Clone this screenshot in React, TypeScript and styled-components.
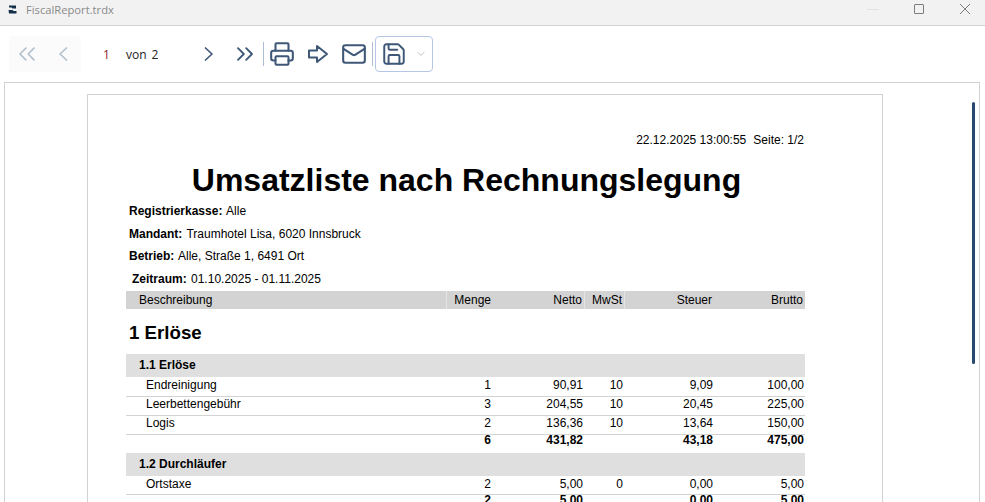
import React from "react";
import styled, { createGlobalStyle } from "styled-components";
import { ChevronDown, ChevronsLeft, ChevronsRight, Mail, Printer, Save } from "lucide-react";

const GlobalStyle = createGlobalStyle`
  html, body {
    margin: 0;
    padding: 0;
    height: 502px;
    overflow: hidden;
    background: #fff;
  }
`;

const header = ["Beschreibung", "Menge", "Netto", "MwSt", "Steuer", "Brutto"];

const groups = [
  {
    title: "1.1 Erlöse",
    firstRowHeight: 20,
    rows: [
      ["Endreinigung", "1", "90,91", "10", "9,09", "100,00"],
      ["Leerbettengebühr", "3", "204,55", "10", "20,45", "225,00"],
      ["Logis", "2", "136,36", "10", "13,64", "150,00"],
    ],
    total: ["", "6", "431,82", "", "43,18", "475,00"],
  },
  {
    title: "1.2 Durchläufer",
    firstRowHeight: 19,
    rows: [["Ortstaxe", "2", "5,00", "0", "0,00", "5,00"]],
    total: ["", "2", "5,00", "", "0,00", "5,00"],
  },
];

const SingleChevron: React.FC<{ left?: boolean }> = ({ left }) => (
  <svg width="10" height="14" viewBox="0 0 10 14" fill="none">
    <path
      d={left ? "M8.5 1L2 7l6.5 6" : "M1.5 1L8 7l-6.5 6"}
      stroke="currentColor"
      strokeWidth="1.7"
      strokeLinecap="round"
      strokeLinejoin="round"
    />
  </svg>
);

const App: React.FC = () => {
  return (
    <Window>
      <GlobalStyle />
      <TitleBar>
        <TitleLeft>
          <svg width="9" height="9" viewBox="0 0 9 9">
            <path d="M1 0.5h7v3H4.5L3.5 2.5H1zM0.5 5h4l1 1h3v2.5H1z" fill="#14304a" />
          </svg>
          <TitleText>FiscalReport.trdx</TitleText>
        </TitleLeft>
        <WindowButtons>
          <svg width="12" height="12" viewBox="0 0 12 12">
            <path d="M0 6.5h12" stroke="#e2e2e2" strokeWidth="1" />
          </svg>
          <svg width="12" height="12" viewBox="0 0 12 12">
            <rect x="1.5" y="1.5" width="9" height="9" fill="none" stroke="#7d7d7d" strokeWidth="1" rx="0.5" />
          </svg>
          <svg width="12" height="12" viewBox="0 0 12 12">
            <path d="M1 1l10 10M11 1L1 11" stroke="#7d7d7d" strokeWidth="1" />
          </svg>
        </WindowButtons>
      </TitleBar>

      <Toolbar>
        <DisabledNav>
          <NavButton $disabled><ChevronsLeft size={28} strokeWidth={1.4} /></NavButton>
          <NavButton $disabled><SingleChevron left /></NavButton>
        </DisabledNav>
        <PageNumber>1</PageNumber>
        <PageOf>von</PageOf>
        <PageTotal>2</PageTotal>
        <NavButton><SingleChevron /></NavButton>
        <NavButton><ChevronsRight size={28} strokeWidth={1.6} /></NavButton>
        <Divider />
        <ActionButton><Printer size={26} strokeWidth={1.9} /></ActionButton>
        <ActionButton>
          <svg width="22" height="20" viewBox="0 0 22 20" fill="none">
            <path d="M2 6.5h8V2l10 8-10 8v-4.5H2z" stroke="currentColor" strokeWidth="2" strokeLinejoin="round" />
          </svg>
        </ActionButton>
        <ActionButton><Mail size={26} strokeWidth={1.9} /></ActionButton>
        <Divider />
        <SaveButton>
          <Save size={26} strokeWidth={1.8} />
          <ChevronDown size={12} strokeWidth={1.5} color="#a9a9a9" />
        </SaveButton>
      </Toolbar>

      <Viewer>
        <Page>
          <Stamp>
            <span>22.12.2025 13:00:55</span>
            <span>Seite: 1/2</span>
          </Stamp>
          <Title>Umsatzliste nach Rechnungslegung</Title>
          <MetaLine><b>Registrierkasse:</b> Alle</MetaLine>
          <MetaLine><b>Mandant:</b> Traumhotel Lisa, 6020 Innsbruck</MetaLine>
          <MetaLine><b>Betrieb:</b> Alle, Straße 1, 6491 Ort</MetaLine>
          <MetaLine $indent><b>Zeitraum:</b> 01.10.2025 - 01.11.2025</MetaLine>

          <HeaderRow>
            {header.map((label, i) => (
              <HeaderCell
                key={label}
                $first={i === 0}
                $plain={i === 1 || i >= 4}
                $tight={i === 1 || i === 5}
              >
                {label}
              </HeaderCell>
            ))}
          </HeaderRow>

          <SectionTitle>1 Erlöse</SectionTitle>

          {groups.map((group) => (
            <div key={group.title}>
              <GroupBar>{group.title}</GroupBar>
              {group.rows.map((row, r) => (
                <Row key={row[0]} $height={r === 0 ? group.firstRowHeight : 19} $lead={r === 0}>
                  {row.map((value, i) => (
                    <Cell key={i} $first={i === 0} $tight={i === 5}>{value}</Cell>
                  ))}
                </Row>
              ))}
              <TotalRow>
                {group.total.map((value, i) => (
                  <Cell key={i} $first={i === 0} $tight={i === 5}>{value}</Cell>
                ))}
              </TotalRow>
            </div>
          ))}
        </Page>
        <ScrollThumb />
      </Viewer>
    </Window>
  );
};

export default App;

const columns = "321px 46px 92px 40px 90px 90px";

const Window = styled.div`
  width: 985px;
  height: 502px;
  overflow: hidden;
  display: flex;
  flex-direction: column;
  background: #fff;
  font-family: "Liberation Sans", Arial, sans-serif;
`;

const TitleBar = styled.div`
  height: 25px;
  flex: none;
  display: flex;
  align-items: center;
  justify-content: space-between;
  background: #f2f2f2;
  border-bottom: 1px solid #d2d2d2;
`;

const TitleLeft = styled.div`
  display: flex;
  align-items: center;
  gap: 9px;
  padding-left: 8px;
  margin-top: -7px;
`;

const TitleText = styled.span`
  font-family: "Open Sans", "Noto Sans", sans-serif;
  font-size: 11.2px;
  color: #8a8a8a;
`;

const WindowButtons = styled.div`
  display: flex;
  align-items: center;
  gap: 34px;
  padding-right: 14px;
  margin-top: -7px;
`;

const Toolbar = styled.div`
  height: 56px;
  flex: none;
  display: flex;
  align-items: center;
  padding-left: 9px;
  box-sizing: border-box;
  color: #3f5878;
`;

const DisabledNav = styled.div`
  display: flex;
  align-items: center;
  height: 36px;
  background: #fbfbfb;
  border-radius: 4px;
`;

const NavButton = styled.div<{ $disabled?: boolean }>`
  width: 36px;
  height: 36px;
  display: flex;
  align-items: center;
  justify-content: center;
  color: ${(p) => (p.$disabled ? "#b4bfcd" : "#3f5878")};
`;

const PageNumber = styled.span`
  width: 11px;
  margin-left: 22px;
  font-family: "Open Sans", sans-serif;
  font-size: 12px;
  color: #8a1a2a;
`;

const PageOf = styled.span`
  margin-left: 12px;
  font-family: "Open Sans", sans-serif;
  font-size: 12px;
  color: #222;
`;

const PageTotal = styled.span`
  margin-left: 5px;
  margin-right: 33px;
  font-family: "Open Sans", sans-serif;
  font-size: 12px;
  color: #222;
`;

const Divider = styled.div`
  width: 1px;
  height: 24px;
  background: #aebdd2;
`;

const ActionButton = styled.div`
  width: 36px;
  height: 36px;
  display: flex;
  align-items: center;
  justify-content: center;
`;

const SaveButton = styled.div`
  width: 58px;
  height: 36px;
  box-sizing: border-box;
  margin-left: 2px;
  padding-left: 5px;
  display: flex;
  align-items: center;
  gap: 8px;
  border: 1px solid #b4c8e6;
  border-radius: 4px;
`;

const Viewer = styled.div`
  position: relative;
  flex: 1;
  margin: 0 5px 0 4px;
  padding: 11px 0 0 82px;
  border: 1px solid #d2d2d2;
  border-bottom: none;
  min-height: 0;
  overflow: hidden;
`;

const Page = styled.div`
  width: 796px;
  height: 500px;
  box-sizing: border-box;
  padding: 0 77px 0 38px;
  border: 1px solid #d2d2d2;
  background: #fff;
  color: #000;
`;

const Stamp = styled.div`
  display: flex;
  justify-content: flex-end;
  gap: 7px;
  padding-top: 38px;
  padding-right: 1px;
  font-size: 12px;
  line-height: 14px;
`;

const Title = styled.h1`
  margin: 14px 0 0;
  padding-left: 2px;
  font-size: 32px;
  line-height: 39px;
  font-weight: 700;
  text-align: center;
  white-space: nowrap;
`;

const MetaLine = styled.div<{ $indent?: boolean }>`
  height: 22.5px;
  padding-left: ${(p) => (p.$indent ? "6px" : "3px")};
  font-size: 12px;
  line-height: 22px;
  white-space: nowrap;
  b {
    font-weight: 700;
    margin-right: 1px;
  }
`;

const HeaderRow = styled.div`
  display: grid;
  grid-template-columns: ${columns};
  height: 18px;
  margin-top: 1px;
  background: #d3d3d3;
`;

const HeaderCell = styled.div<{ $first?: boolean; $plain?: boolean; $tight?: boolean }>`
  font-size: 12px;
  line-height: 18px;
  text-align: ${(p) => (p.$first ? "left" : "right")};
  padding: ${(p) => (p.$first ? "0 0 0 13px" : p.$tight ? "0 1px 0 0" : "0 2px 0 0")};
  border-right: 1px solid ${(p) => (p.$plain ? "transparent" : "#e4e4e4")};
`;

const SectionTitle = styled.h2`
  margin: 0;
  height: 45px;
  padding-left: 3px;
  font-size: 18.7px;
  line-height: 47px;
  font-weight: 700;
`;

const GroupBar = styled.div`
  height: 23px;
  padding-left: 13px;
  background: #dfdfdf;
  font-size: 12px;
  line-height: 22px;
  font-weight: 700;
`;

const Row = styled.div<{ $height?: number; $lead?: boolean }>`
  display: grid;
  grid-template-columns: ${columns};
  box-sizing: border-box;
  height: ${(p) => p.$height ?? 19}px;
  border-bottom: 1px solid #d3d3d3;
  font-size: 12px;
  line-height: ${(p) => (p.$lead ? 16 : 15)}px;
`;

const TotalRow = styled(Row)`
  height: 18px;
  border-bottom: none;
  font-weight: 700;
  line-height: 11px;
`;

const Cell = styled.div<{ $first?: boolean; $tight?: boolean }>`
  text-align: ${(p) => (p.$first ? "left" : "right")};
  padding: ${(p) => (p.$first ? "0 0 0 20px" : p.$tight ? "0 1px 0 0" : "0 2px 0 0")};
  white-space: nowrap;
`;

const ScrollThumb = styled.div`
  position: absolute;
  top: 19px;
  right: 4px;
  width: 3px;
  height: 262px;
  background: #27496d;
  border-radius: 2px;
`;
